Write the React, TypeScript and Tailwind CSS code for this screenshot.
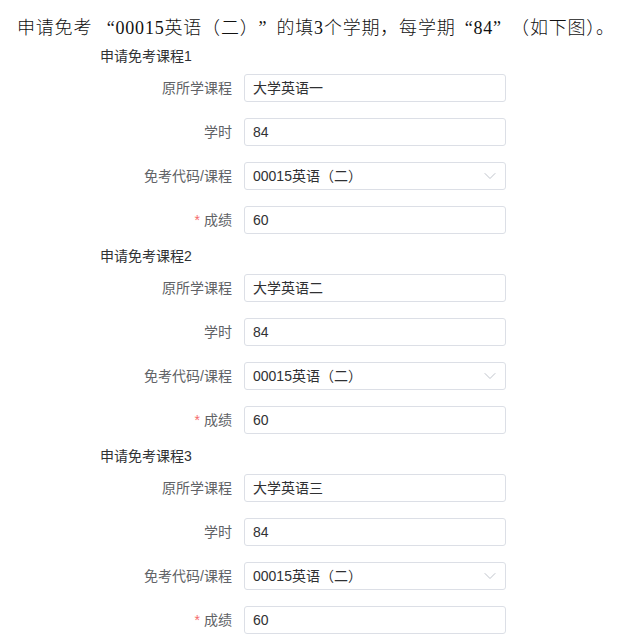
import { ChevronDown } from "lucide-react";

type Course = { name: string };

const courses: Course[] = [{ name: "大学英语一" }, { name: "大学英语二" }, { name: "大学英语三" }];

// full-width quotes like SimSun draws them
const OpenQ = () => <span className="inline-block w-[1em] text-right">“</span>;
const CloseQ = () => <span className="inline-block w-[1em] text-left">”</span>;

function Row({ label, required, children }: { label: string; required?: boolean; children: React.ReactNode }) {
  return (
    <div className="flex items-center gap-3">
      <div className="w-[132px] text-right text-[14px] leading-5 text-[#606266]">
        {required && <span className="mr-1 text-[#f56c6c]">*</span>}
        {label}
      </div>
      <div className="relative flex h-[28px] w-[262px] items-center rounded-[3px] border border-[#dcdfe6] bg-white pl-2 text-[14px] text-[#303133]">
        {children}
      </div>
    </div>
  );
}

export default function App() {
  return (
    <main
      className="min-h-screen bg-white"
      style={{ fontFamily: '"Liberation Sans", "Noto Sans CJK SC", sans-serif' }}
    >
      <p
        className="whitespace-nowrap pl-[17px] pt-[17px] text-[18px] font-light leading-[22px] tracking-[0.8px] text-[#111]"
        style={{ fontFamily: '"Liberation Serif", "Noto Sans CJK SC", serif' }}
      >
        申请免考 <OpenQ />00015英语（二）<CloseQ />的填3个学期，每学期<OpenQ />84<CloseQ />（如下图）。
      </p>
      <div className="pl-[100px] pt-[7px]">
        {courses.map((c, i) => (
          <section key={i} className="pb-3">
            <h3 className="h-5 text-[14px] leading-5 text-[#303133]">申请免考课程{i + 1}</h3>
            <div className="mt-2 flex flex-col gap-4">
              <Row label="原所学课程">{c.name}</Row>
              <Row label="学时">84</Row>
              <Row label="免考代码/课程">
                00015英语（二）
                <ChevronDown className="absolute right-[5px] top-[3px] h-5 w-5 text-[#c0c4cc]" strokeWidth={1.2} />
              </Row>
              <Row label="成绩" required>
                60
              </Row>
            </div>
          </section>
        ))}
      </div>
    </main>
  );
}
